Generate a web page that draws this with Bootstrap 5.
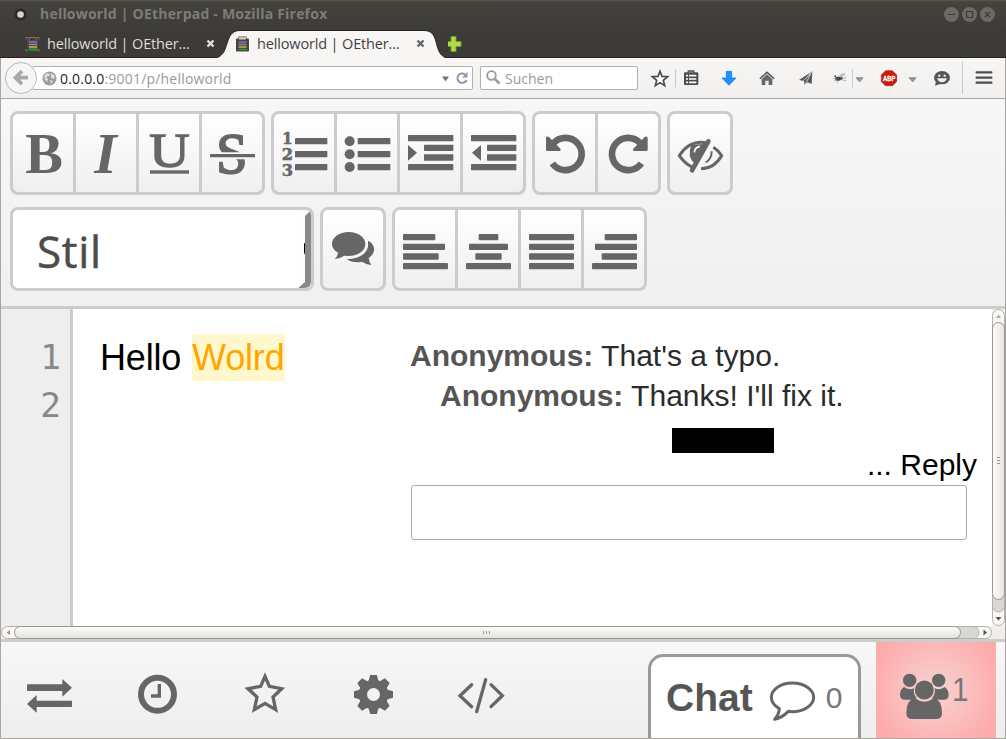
<!DOCTYPE html>
<html lang="de">
<head>
<meta charset="utf-8">
<title>helloworld | OEtherpad</title>
<link href="https://cdn.jsdelivr.net/npm/bootstrap@5.3.0/dist/css/bootstrap.min.css" rel="stylesheet">
<style>
body{height:739px;overflow:hidden;background:#000;font-family:"Liberation Sans",sans-serif}
svg{display:block;flex:none}
.ui{font-family:"Open Sans",sans-serif;white-space:nowrap}
.win{height:739px;border-radius:7px 7px 0 0;background:#3c3b37}
.titlebar{height:30px;background:linear-gradient(#474640 0,#42413c 4px,#3d3c38);padding:0 11px 3px 14px;border-top:1px solid #55534d}
.titlebar .ui{font-weight:700;font-size:14px;color:#7f7c74;margin:-2px 0 0 13px;letter-spacing:.21px}
.tabs{height:28px;border-bottom:1px solid #23221f}
.tab-off{width:188px;margin-left:25px;font-size:14.5px;color:#dfdbd2;letter-spacing:-.15px}
.tab-on{width:235px;padding-left:22px;font-size:14.5px;color:#3f3f3f;height:28px;letter-spacing:-.15px}
.tab-on>.shape{position:absolute;left:0;top:0}
.tab-on>.item{position:relative}
.title-text{width:143px;margin-left:7px}
.navrow{height:41px;background:linear-gradient(#f7f6f5,#f1f0ef);border:solid #aaa59f;border-width:0 1px 1px}
.field{height:24px;background:#fff;border:1px solid #b4afa9;border-radius:2px;font-size:14px;color:#9a9a9a}
.urlbar{width:441px;margin-left:-6px;padding-left:9px;letter-spacing:.2px}
.url-text{padding-left:3px}
.search{width:158px;margin-left:7px;padding-left:5px}
.back{z-index:1;margin-left:4px}
.page{height:640px;border:1px solid #aaa59f;border-top:0;background:#fff}
.editbar{height:210px;border-bottom:3px solid #ccc;background:linear-gradient(#f7f7f7,#f0f0f0);padding:12px 9px}
.tools{gap:6px;height:84px;margin-bottom:12px}
.tool-set{border:3px solid #ccc;border-radius:8px;background:linear-gradient(#fff,#efefef);height:84px}
.tool-set .btn{padding:0;border:0;border-radius:0;flex:none;width:60px;color:#666}
.tool-set .btn+.btn{border-left:3px solid #ccc;width:63px;margin-left:0!important}
.ink{fill:#666}.line{fill:none;stroke:#666}
.tool-set text{font-family:"Liberation Serif",serif;font-weight:700}
.tool-set .digits text{font-family:"DejaVu Serif",serif}
.style-box{width:304px;background:#fff;border:3px solid #ccc;border-radius:8px;font-size:44px;color:#4c4c4c;padding-left:24px;letter-spacing:.7px}
.style-box span{padding-top:4px;-webkit-text-stroke:.5px #4c4c4c}
.pad{height:317px}
.gutter{width:72px;background:#eee;border-right:3px solid #ccc;padding:24px 9px 0 0;text-align:right;font:34.5px/48px "DejaVu Sans Mono",monospace;color:#888}
.doc{width:337px;padding:25px 0 0 27px;font-size:36px;line-height:47px;color:#000;letter-spacing:-.17px;word-spacing:1px;white-space:nowrap}
.hit{background:#fff8cd;color:#ffa500;display:inline-block;height:47px}
.thread{width:582px;padding-top:27px;font-size:30px;line-height:40px;color:#2b2b2b;white-space:nowrap}
.thread strong{color:#555}
.redact{width:102px;height:25px;background:#000;margin:12px 0 0 262px}
.reply-link{color:#000;line-height:24px;padding-right:15px;text-align:right;height:32px}
.thread .form-control{width:556px;height:55px;border:1px solid #aaa;border-radius:3px;margin-left:1px}
.footer-bar{height:99px;border-top:3px solid #ccc;background:linear-gradient(#f7f7f7,#eee);padding:0 9px 0 19px}
.hrow{height:13px;background:#efeeec}
.icons{gap:48px}
.chat{width:213px;height:84px;border:3px solid #999;border-bottom:0;border-radius:15px 15px 0 0;background:#fff;padding-left:15px;color:#555}
.chat b{font-size:39px;line-height:81px}
.chat span{font-size:30px;line-height:82px;color:#777}
.people{width:120px;height:96px;margin-left:15px;background:radial-gradient(circle at 50% 50%,#f7d3d3,#feabab 66px)}
.people svg{margin-left:22px}
.people span{font-size:33px;color:#777;line-height:96px;margin-left:-3px;transform:scaleX(.9);transform-origin:left}
</style>
</head>
<body>
<div class="win d-flex flex-column">
 <div class="titlebar d-flex align-items-center">
  <svg width="13" height="13"><circle cx="6.500" cy="6.500" r="6" fill="#2b2a27"/><circle cx="6.500" cy="6.500" r="3.300" fill="#d8d5ce"/></svg>
  <span class="ui">helloworld | OEtherpad - Mozilla Firefox</span>
  <svg class="ms-auto" width="52" height="16" fill="none" stroke="#3b3a36" stroke-width="1.200"><g fill="#6d6a63" stroke="none"><circle cx="8.500" cy="8.500" r="7.500"/><circle cx="26.500" cy="8.500" r="7.500"/><circle cx="44.500" cy="8.500" r="7.500"/></g><path d="M5 8.500h7M23.500 5.500h6v6h-6zM42 6l5 5m0-5l-5 5"/></svg>
 </div>
 <div class="tabs d-flex">
  <div class="tab-off d-flex align-items-center ui">
   <svg width="15" height="16"><path d="M4 4V1.500h7V4M1 3.500V1.500h2M14 3.500V1.500h-2M1 13v2h2M14 13v2h-2" fill="none" stroke="#777"/><path d="M2 4h11v11H2z" fill="#4b4a45"/><path d="M4 6h8" stroke="#d84a9b" stroke-width="1.500"/><path d="M4 8.500h8" stroke="#3fa3d8" stroke-width="1.500"/><path d="M4 11h8" stroke="#e7ad28" stroke-width="1.500"/><path d="M4 13.500h8" stroke="#2d9a25" stroke-width="2"/></svg>
   <span class="title-text">helloworld | OEther…</span>
   <svg width="10" height="10" class="ms-3" stroke="#e4e1da" stroke-width="2.400"><path d="M1.500 1.500l6 6m0-6l-6 6"/></svg>
  </div>
  <div class="tab-on position-relative d-flex align-items-center ui">
   <svg class="shape" width="236" height="29"><path d="M0 28.500C19 27 9 .5 27 .5H211C229 .5 218 26 236 28.500Z" fill="#f7f6f5" stroke="#23221f"/><path d="M0 29h236" stroke="#f7f6f5" stroke-width="2"/></svg>
   <svg class="item" width="15" height="16"><path d="M4 4V1h7V4" fill="none" stroke="#888" stroke-width="1.500"/><rect x="1" y="2.500" width="13" height="13" rx="1" fill="#45443f"/><path d="M4 2.500h7" stroke="#ccc" stroke-width="2"/><path d="M3.500 6h8" stroke="#d84a9b" stroke-width="1.500"/><path d="M3.500 8.500h8" stroke="#3fa3d8" stroke-width="1.500"/><path d="M3.500 11h8" stroke="#e7ad28" stroke-width="1.500"/><path d="M3.500 13.500h8" stroke="#2d9a25" stroke-width="1.500"/></svg>
   <span class="item title-text">helloworld | OEther…</span>
   <svg width="10" height="10" class="item ms-3" stroke="#666" stroke-width="2.400"><path d="M1.500 1.500l6 6m0-6l-6 6"/></svg>
  </div>
  <svg width="20" height="28" viewBox="448 30 20 28"><path d="M445.500 41.500h5v-5h5v5h5v5h-5v5h-5v-5h-5z" transform="translate(.5 0)" fill="#b5d84f" stroke="#6a9a2c"/></svg>
 </div>
 <div class="navrow d-flex align-items-center">
  <svg class="back position-relative" width="33" height="33"><circle cx="16" cy="16" r="15.500" fill="#f7f6f5" stroke="#b3b9c1"/><path d="M17 10l-6.500 6.500L17 23M11 16.500h12" transform="translate(0 -.8)" fill="none" stroke="#a9a9a7" stroke-width="3.800"/></svg>
  <div class="field urlbar d-flex align-items-center ui">
   <svg width="15" height="15"><circle cx="7.500" cy="7.500" r="7" fill="#9c9c9c"/><path d="M2 5l3-3 3 1-1 2-3 1 2 2-1 3-2-2zM9 2l4 3-1 3-3-1zM8 9l3 1-2 3z" fill="#dedede"/></svg>
   <span class="url-text"><span class="text-dark">0.0.0.0</span>:9001/p/helloworld</span>
   <svg class="ms-auto" width="31" height="16"><path d="M1 6.500h7l-3.500 5z" fill="#777"/><path d="M24 4.500a4.700 4.700 0 1 0 1.500 5.500" fill="none" stroke="#8d99a8" stroke-width="2"/><path d="M26.500 2v5.500H21z" fill="#8d99a8"/></svg>
  </div>
  <div class="field search d-flex align-items-center ui">
   <svg width="16" height="16"><circle cx="5.500" cy="5.500" r="4.300" fill="none" stroke="#999" stroke-width="1.800"/><path d="M8.800 8.800l4.700 4.700" stroke="#999" stroke-width="2.600"/></svg>
   <span class="url-text">Suchen</span>
  </div>
  <div class="d-flex ms-auto">
   <svg width="30" height="40" viewBox="930 174 90 120"><path d="M975 214l6 15 17 1-13 11 4 16-14-9-14 9 4-16-13-11 17-1z" fill="#fff" stroke="#4c4c4c" stroke-width="5"/></svg>
   <svg width="32" height="40" viewBox="27 174 96 120"><path d="M28.500 208v54" stroke="#c3c9d1" stroke-width="3"/><path d="M67 218v-5h16v5" fill="none" stroke="#4c4c4c" stroke-width="4"/><rect x="54" y="217" width="43" height="38" rx="4" fill="#4c4c4c"/><path d="M60 227h6m3 0h22M60 237h6m3 0h22M60 247h6m3 0h22" stroke="#fff" stroke-width="5"/></svg>
   <svg width="41" height="40" viewBox="123 174 123 120"><path d="M181 214h16v20h13l-21 22-21-22h13z" fill="#1e90ff" stroke="#0877dd" stroke-width="2"/></svg>
   <svg width="38" height="40" viewBox="246 174 114 120"><path d="M280 235l23-21 23 21-3 3-20-18-20 18z" fill="#4c4c4c"/><path d="M287 237l16-14 16 14v18h-11v-13h-10v13h-11z" fill="#666"/></svg>
   <svg width="38" height="40" viewBox="360 174 114 120"><path d="M399 240l40-26-2 38-12-5-9 8-2-12z" fill="#555"/><path d="M413 242l23-25-14 28-5 8" fill="none" stroke="#eee" stroke-width="2.500"/></svg>
   <svg width="44" height="40" viewBox="474 174 132 120"><g fill="#444"><ellipse cx="516" cy="236" rx="9" ry="6"/><circle cx="508" cy="229" r="3"/><circle cx="526" cy="235" r="4"/></g><path d="M515 229l17-10 8 3-14 10z" fill="#bbb"/><path d="M500 235l10-1m-6 9l10-6m2 4l-3 8m12-10l15 3m-12-8l13-1" stroke="#999" stroke-width="2"/><path d="M559.500 207v55" stroke="#ccc" stroke-width="3"/><path d="M570 233h21l-10 13z" fill="#999" stroke="#777" stroke-width="2"/></svg>
   <svg width="57" height="40" viewBox="606 174 171 120"><path d="M659 212h20l13 13v20l-13 12h-20l-13-12v-20z" fill="#cd1b0d" stroke="#a22" stroke-width="2"/><text x="651" y="242" font-family="Liberation Sans" font-weight="700" font-size="20" fill="#fff" stroke="#fff" stroke-width=".8" textLength="37" lengthAdjust="spacingAndGlyphs">ABP</text><path d="M729 233h21l-10 13z" fill="#999" stroke="#777" stroke-width="2"/></svg>
   <svg width="35" height="40" viewBox="777 174 105 120"><ellipse cx="828" cy="233" rx="24" ry="20" fill="#555"/><path d="M810 243l-3 14 18-6z" fill="#555"/><circle cx="820" cy="227" r="3.500" fill="#eee"/><circle cx="836" cy="227" r="3.500" fill="#eee"/><path d="M813 235h30q-4 12-15 12t-15-12z" fill="#eee"/></svg>
   <svg width="45" height="40" viewBox="882 174 135 120"><path d="M889.500 184v98" stroke="#c3c9d8" stroke-width="3"/><path d="M932 217h44M932 233h44M932 248h44" stroke="#4c4c4c" stroke-width="7" stroke-linecap="round"/></svg>
  </div>
 </div>
 <div class="page">
  <div class="editbar">
   <div class="tools d-flex">
    <div class="btn-group tool-set">
     <button class="btn"><svg class="ink" width="60" height="78" viewBox="39 42 180 234"><text x="76" y="220" font-size="174" textLength="113" lengthAdjust="spacingAndGlyphs">B</text></svg></button>
     <button class="btn"><svg class="ink" width="60" height="78" viewBox="228 42 180 234"><text x="283" y="220" font-size="174" font-style="italic">I</text></svg></button>
     <button class="btn"><svg class="ink" width="60" height="78" viewBox="417 42 180 234"><text x="448" y="200" font-size="143" style="font-weight:400" stroke="#666" stroke-width="4" textLength="121" lengthAdjust="spacingAndGlyphs">U</text><rect x="450" y="211" width="117" height="10"/></svg></button>
     <button class="btn"><svg class="ink" width="60" height="78" viewBox="606 42 180 234"><text x="649" y="218" font-size="168" style="font-weight:400" stroke="#666" stroke-width="6">S</text><path d="M630 157h135v21H630z" fill="#f7f7f7"/><rect x="630" y="162" width="135" height="10" rx="2"/></svg></button>
    </div>
    <div class="btn-group tool-set">
     <button class="btn"><svg class="ink" width="60" height="78" viewBox="27 42 180 234"><g class="digits" font-size="50" stroke="#666" stroke-width="1.500"><text x="51" y="133" textLength="32" lengthAdjust="spacingAndGlyphs">1</text><text x="50" y="181" textLength="34" lengthAdjust="spacingAndGlyphs">2</text><text x="50" y="229" textLength="34" lengthAdjust="spacingAndGlyphs">3</text></g><rect x="90" y="114" width="97" height="19" rx="2"/><rect x="90" y="153" width="97" height="19" rx="2"/><rect x="90" y="192" width="97" height="19" rx="2"/></svg></button>
     <button class="btn"><svg class="ink" width="60" height="78" viewBox="216 42 180 234"><circle cx="254" cy="124" r="15"/><circle cx="254" cy="163" r="15"/><circle cx="254" cy="201" r="15"/><rect x="278" y="114" width="98" height="19" rx="2"/><rect x="278" y="153" width="98" height="19" rx="2"/><rect x="278" y="192" width="98" height="19" rx="2"/></svg></button>
     <button class="btn"><svg class="ink" width="60" height="78" viewBox="405 42 180 234"><rect x="429" y="105" width="136" height="19" rx="2"/><rect x="477" y="134" width="88" height="19" rx="2"/><rect x="477" y="163" width="88" height="19" rx="2"/><rect x="429" y="192" width="136" height="19" rx="2"/><path d="M429 135l27 23-27 24z"/></svg></button>
     <button class="btn"><svg class="ink" width="60" height="78" viewBox="594 42 180 234"><rect x="618" y="105" width="136" height="19" rx="2"/><rect x="666" y="134" width="88" height="19" rx="2"/><rect x="666" y="163" width="88" height="19" rx="2"/><rect x="618" y="192" width="136" height="19" rx="2"/><path d="M648 135l-27 23 27 24z"/></svg></button>
    </div>
    <div class="btn-group tool-set">
     <button class="btn"><svg class="ink" width="60" height="78" viewBox="45 42 180 234"><g id="turn"><path d="M97 190A48.500 48.500 0 1 0 101 129" class="line" stroke-width="20"/><path d="M78 114q2-7 9-3l34 35q3 6-3 7H82q-4 0-4-4z"/></g></svg></button>
     <button class="btn"><svg class="ink" width="60" height="78" viewBox="234 42 180 234"><use href="#turn" transform="translate(461 0) scale(-1 1)"/></svg></button>
    </div>
    <div class="btn-group tool-set">
     <button class="btn"><svg class="ink" width="60" height="78" viewBox="450 42 180 234"><path class="line" stroke-width="9" d="M562 129Q510 117 478 167Q494 191 518 202M580 142Q597 153 605 167Q583 205 543 206"/><path d="M514 134Q500 170 524 191L564 131Z"/><path d="M523 157Q524 142 540 139" fill="none" stroke="#f9f9f9" stroke-width="5"/><path class="line" stroke-width="6" d="M575 154Q575 177 558 187"/><path class="line" stroke-width="14" stroke-linecap="round" d="M565 124L516 211"/></svg></button>
    </div>
   </div>
   <div class="tools d-flex">
    <div class="style-box d-flex align-items-center ui"><span>Stil</span>
     <svg class="ms-auto" width="14" height="78" viewBox="96 330 42 234"><path d="M96 330h24v234H96z" fill="#fefefb"/><path d="M120 348l13-13q5 3 5 10v199q0 20-20 20h-18l20-18z" fill="#888"/><path d="M117 430h3v35q-3-4-3-12z" fill="#000"/></svg></div>
    <div class="btn-group tool-set">
     <button class="btn"><svg class="ink" width="60" height="78" viewBox="174 330 180 234"><path d="M309 422C331 432 335 459 311 474Q312 486 319 495Q303 494 291 485C274 489 258 486 245 478Q300 475 309 440Z"/><path d="M251 396c28 0 50 16 50 36s-22 36-50 36l-13-1q-13 9-29 10 9-8 10-19c-11-6-18-16-18-26 0-20 22-36 50-36z"/></svg></button>
    </div>
    <div class="btn-group tool-set">
     <button class="btn"><svg class="ink" width="60" height="78" viewBox="390 330 180 234"><rect x="414" y="402" width="97" height="19" rx="3"/><rect x="414" y="431" width="126" height="19" rx="3"/><rect x="414" y="460" width="107" height="19" rx="3"/><rect x="414" y="489" width="135" height="19" rx="3"/></svg></button>
     <button class="btn"><svg class="ink" width="60" height="78" viewBox="579 330 180 234"><rect x="641" y="402" width="59" height="19" rx="3"/><rect x="612" y="431" width="117" height="19" rx="3"/><rect x="631" y="460" width="79" height="19" rx="3"/><rect x="603" y="489" width="135" height="19" rx="3"/></svg></button>
     <button class="btn"><svg class="ink" width="60" height="78" viewBox="3 330 180 234"><rect x="27" y="402" width="135" height="19" rx="3"/><rect x="27" y="431" width="135" height="19" rx="3"/><rect x="27" y="460" width="135" height="19" rx="3"/><rect x="27" y="489" width="135" height="19" rx="3"/></svg></button>
     <button class="btn"><svg class="ink" width="60" height="78" viewBox="192 330 180 234"><rect x="254" y="402" width="97" height="19" rx="3"/><rect x="225" y="431" width="126" height="19" rx="3"/><rect x="245" y="460" width="106" height="19" rx="3"/><rect x="216" y="489" width="135" height="19" rx="3"/></svg></button>
    </div>
   </div>
  </div>
  <div class="pad d-flex">
   <div class="gutter">1<br>2</div>
   <div class="doc">Hello <span class="hit">Wolrd</span></div>
   <div class="thread">
    <div><strong>Anonymous:</strong> That's a typo.</div>
    <div style="padding-left:30px"><strong>Anonymous:</strong> Thanks! I'll fix it.</div>
    <div class="redact"></div>
    <div class="reply-link">... Reply</div>
    <input class="form-control" aria-label="Reply">
   </div>
   <svg width="13" height="317"><defs><linearGradient id="gv"><stop offset="0" stop-color="#fdfdfc"/><stop offset="1" stop-color="#e6e4e1"/></linearGradient><linearGradient id="gh" x2="0" y2="1"><stop offset="0" stop-color="#fdfdfc"/><stop offset="1" stop-color="#e3e1de"/></linearGradient></defs><rect width="13" height="317" fill="#f4f3f1"/><rect x=".5" y=".5" width="12" height="316" rx="6" fill="#f9f8f7" stroke="#b5b1ac"/><rect x=".5" y="250" width="12" height="53" rx="6" fill="#dad8d5" stroke="#b5b1ac"/><rect x=".5" y="13.500" width="12" height="277" rx="6" fill="url(#gv)" stroke="#99958f"/><path d="M4 9h5L6.500 5.500z" fill="#aaa"/><path d="M3.500 308h6L6.500 311.500z" fill="#555"/><path d="M5 148.500h3m-3 3h3m-3 3h3" stroke="#999"/></svg>
  </div>
  <div class="hrow">
   <svg width="1004" height="13"><rect x=".5" y=".5" width="990" height="12" rx="6" fill="#f9f8f7" stroke="#b5b1ac"/><rect x="900" y=".5" width="78" height="12" rx="6" fill="#dad8d5" stroke="#b5b1ac"/><rect x="13.500" y=".5" width="946" height="12" rx="6" fill="url(#gh)" stroke="#99958f"/><path d="M9 4v5L5.500 6.500z" fill="#999"/><path d="M982.500 3.500v6l3.500-3z" fill="#555"/><path d="M482.500 5v3m3-3v3m3-3v3" stroke="#999"/></svg>
  </div>
  <div class="footer-bar d-flex">
   <div class="icons d-flex">
    <svg class="ink" width="60" height="96" viewBox="60 96 180 288"><path d="M83 223h104v-16l29 26-29 27v-17H83q-2 0-2-2v-16q0-2 2-2zM214 272H110v-17l-29 27 29 26v-17h104q2 0 2-2v-15q0-2-2-2z"/></svg>
    <svg class="line" width="60" height="96" viewBox="384 96 180 288"><circle cx="472.500" cy="253" r="49.500" stroke-width="18"/><path d="M478 222v36h-25" stroke-width="10"/></svg>
    <svg class="line" width="60" height="96" viewBox="708 96 180 288"><path d="M795 199L808 229 845 236 819 261 827 299 795 280 763 299 771 261 744 236 782 229Z" stroke-width="10"/></svg>
    <svg class="ink" width="60" height="96" viewBox="132 96 180 288"><g transform="translate(220.500 253.500)"><circle r="32" class="line" stroke-width="25"/><g id="cog"><path id="tooth" d="M-15-40L-10-58.500H10L15-40ZM-15 40L-10 58.500H10L15 40Z"/><use href="#tooth" transform="rotate(45)"/></g><use href="#cog" transform="rotate(90)"/></g></svg>
    <svg class="line" width="60" height="96" viewBox="456 96 180 288"><path d="M515 224L480 257 515 290M573 224L607 257 573 290M557 209L530 305" stroke-width="10" stroke-linecap="round"/></svg>
   </div>
   <div class="chat d-flex ms-auto align-self-end">
    <b>Chat</b>
    <svg class="line" style="margin-left:12px" width="61" height="81" viewBox="405 141 183 243"><path d="M487 219C522 219 551 238 551 262S522 305 487 305L475 304Q456 323 434 328Q447 313 448 296C434 288 424 276 424 262 424 238 452 219 487 219Z" stroke-width="9" stroke-linejoin="round"/></svg>
    <span>0</span>
   </div>
   <div class="people d-flex">
    <svg class="ink" width="57" height="96" viewBox="804 96 171 288"><circle cx="839" cy="211" r="20"/><circle cx="926" cy="211" r="20"/><path d="M822 231q18 12 30 3-3 18 8 30l-12 5h-22q-16 0-16-15 0-15 12-23zM944 231q-18 12-30 3 3 18-8 30l12 5h22q16 0 16-15 0-15-12-23z"/><circle cx="883" cy="240" r="31" fill="#f7d0d0"/><circle cx="883" cy="240" r="28.500"/><path d="M854 264q29 22 58 0 24 6 24 45 0 18-18 18h-71q-18 0-18-18 0-39 25-45z"/></svg>
    <span>1</span>
   </div>
  </div>
 </div>
</div>
<script src="https://cdn.jsdelivr.net/npm/bootstrap@5.3.0/dist/js/bootstrap.bundle.min.js"></script>
</body>
</html>
